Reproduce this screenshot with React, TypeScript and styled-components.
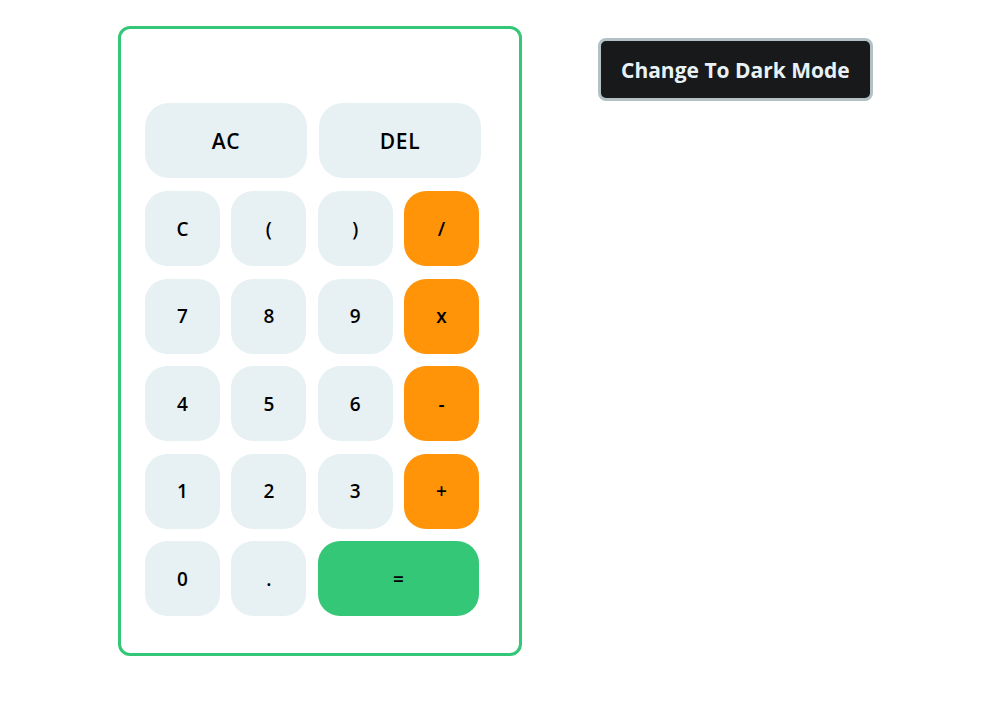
import styled, { createGlobalStyle } from 'styled-components'

const GlobalStyle = createGlobalStyle`
  html, body {
    margin: 0;
    padding: 0;
    background: #ffffff;
    font-family: 'Open Sans', 'Noto Sans', sans-serif;
  }
`

type Kind = 'plain' | 'op' | 'equal'

const KEYS: { label: string; kind: Kind; wide?: boolean }[] = [
  { label: 'C', kind: 'plain' },
  { label: '(', kind: 'plain' },
  { label: ')', kind: 'plain' },
  { label: '/', kind: 'op' },
  { label: '7', kind: 'plain' },
  { label: '8', kind: 'plain' },
  { label: '9', kind: 'plain' },
  { label: 'x', kind: 'op' },
  { label: '4', kind: 'plain' },
  { label: '5', kind: 'plain' },
  { label: '6', kind: 'plain' },
  { label: '-', kind: 'op' },
  { label: '1', kind: 'plain' },
  { label: '2', kind: 'plain' },
  { label: '3', kind: 'plain' },
  { label: '+', kind: 'op' },
  { label: '0', kind: 'plain' },
  { label: '.', kind: 'plain' },
  { label: '=', kind: 'equal', wide: true },
]

export default function App() {
  return (
    <>
      <GlobalStyle />
      <Page>
        <Calculator>
          <Display />
          <TopRow>
            <ClearKey>AC</ClearKey>
            <ClearKey>DEL</ClearKey>
          </TopRow>
          <Keypad>
            {KEYS.map((k) => (
              <Key key={k.label} $kind={k.kind} $wide={k.wide}>
                {k.label}
              </Key>
            ))}
          </Keypad>
        </Calculator>
        <ModeButton>Change To Dark Mode</ModeButton>
      </Page>
    </>
  )
}

const Page = styled.div`
  display: flex;
  align-items: flex-start;
  gap: 76px;
  padding: 26px 0 0 118px;
  min-height: 100vh;
  box-sizing: border-box;
`

const Calculator = styled.div`
  width: 404px;
  height: 630px;
  box-sizing: border-box;
  border: 3px solid #34c778;
  border-radius: 12px;
  padding: 0 0 0 24px;
  display: flex;
  flex-flow: column;
`

const Display = styled.div`
  height: 74px;
`

const TopRow = styled.div`
  display: flex;
  gap: 12px;
  margin-bottom: 13px;
`

const BG: Record<Kind, string> = {
  plain: '#e7f0f3',
  op: '#ff9408',
  equal: '#34c778',
}

const ClearKey = styled.button`
  width: 162px;
  height: 75px;
  border: none;
  border-radius: 24px;
  background: ${BG.plain};
  color: #000000;
  font-family: 'Open Sans', 'Noto Sans', sans-serif;
  font-size: 21px;
  font-weight: 600;
  letter-spacing: 0.6px;
  padding: 0;
  cursor: pointer;
`

const Keypad = styled.div`
  display: grid;
  grid-template-columns: repeat(4, 75px);
  grid-auto-rows: 75px;
  column-gap: 11.33px;
  row-gap: 12.6px;
`

const Key = styled.button<{ $kind: Kind; $wide?: boolean }>`
  grid-column: ${(p) => (p.$wide ? 'span 2' : 'auto')};
  border: none;
  border-radius: 22px;
  background: ${(p) => BG[p.$kind]};
  color: #000000;
  font-family: 'Open Sans', 'Noto Sans', sans-serif;
  font-size: 19px;
  font-weight: 600;
  display: flex;
  align-items: center;
  justify-content: center;
  padding: 0;
  cursor: pointer;
`

const ModeButton = styled.button`
  margin-top: 12px;
  height: 63px;
  padding: 0 20px;
  box-sizing: border-box;
  border: 3px solid #b3c1c6;
  border-radius: 8px;
  background: #18191b;
  color: #e8f2f6;
  font-family: 'Open Sans', 'Noto Sans', sans-serif;
  font-size: 21px;
  font-weight: 700;
  cursor: pointer;
`
